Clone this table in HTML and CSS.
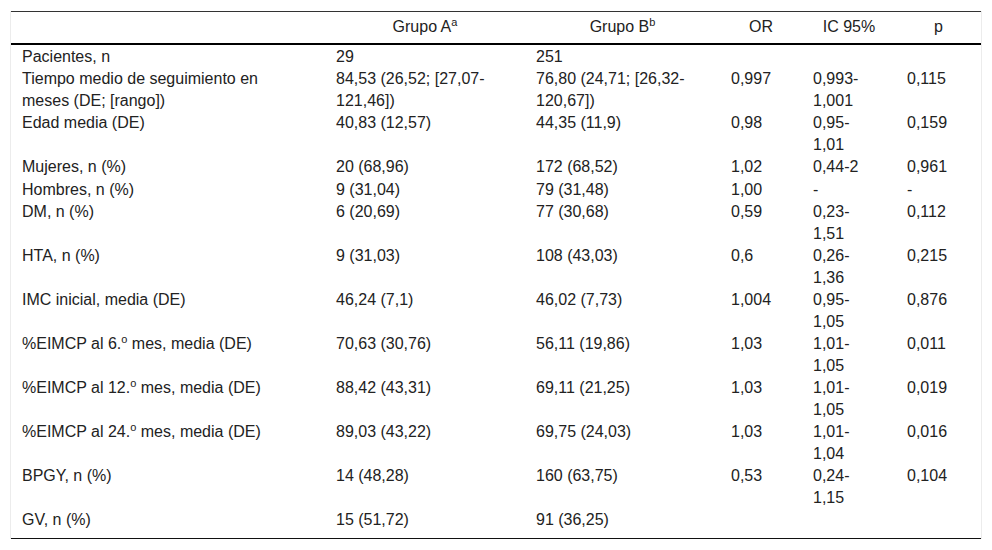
FILE: index.html
```html
<!DOCTYPE html>
<html lang="es">
<head>
<meta charset="utf-8">
<title>Tabla</title>
<link rel="stylesheet" href="styles.css">
</head>
<body>
<div class="wrap">
<table class="data">
<colgroup>
<col class="c1"><col class="c2"><col class="c3"><col class="c4"><col class="c5"><col class="c6">
</colgroup>
<thead>
<tr>
<th></th>
<th>Grupo A<sup>a</sup></th>
<th>Grupo B<sup>b</sup></th>
<th>OR</th>
<th>IC 95%</th>
<th>p</th>
</tr>
</thead>
<tbody>
<tr><td>Pacientes, n</td><td>29</td><td>251</td><td></td><td></td><td></td></tr>
<tr><td>Tiempo medio de seguimiento en meses (DE; [rango])</td><td>84,53 (26,52; [27,07-121,46])</td><td>76,80 (24,71; [26,32-120,67])</td><td>0,997</td><td>0,993-1,001</td><td>0,115</td></tr>
<tr><td>Edad media (DE)</td><td>40,83 (12,57)</td><td>44,35 (11,9)</td><td>0,98</td><td>0,95-1,01</td><td>0,159</td></tr>
<tr><td>Mujeres, n (%)</td><td>20 (68,96)</td><td>172 (68,52)</td><td>1,02</td><td>0,44-2</td><td>0,961</td></tr>
<tr><td>Hombres, n (%)</td><td>9 (31,04)</td><td>79 (31,48)</td><td>1,00</td><td>-</td><td>-</td></tr>
<tr><td>DM, n (%)</td><td>6 (20,69)</td><td>77 (30,68)</td><td>0,59</td><td>0,23-1,51</td><td>0,112</td></tr>
<tr><td>HTA, n (%)</td><td>9 (31,03)</td><td>108 (43,03)</td><td>0,6</td><td>0,26-1,36</td><td>0,215</td></tr>
<tr><td>IMC inicial, media (DE)</td><td>46,24 (7,1)</td><td>46,02 (7,73)</td><td>1,004</td><td>0,95-1,05</td><td>0,876</td></tr>
<tr><td>%EIMCP al 6.<sup>o</sup> mes, media (DE)</td><td>70,63 (30,76)</td><td>56,11 (19,86)</td><td>1,03</td><td>1,01-1,05</td><td>0,011</td></tr>
<tr><td>%EIMCP al 12.<sup>o</sup> mes, media (DE)</td><td>88,42 (43,31)</td><td>69,11 (21,25)</td><td>1,03</td><td>1,01-1,05</td><td>0,019</td></tr>
<tr><td>%EIMCP al 24.<sup>o</sup> mes, media (DE)</td><td>89,03 (43,22)</td><td>69,75 (24,03)</td><td>1,03</td><td>1,01-1,04</td><td>0,016</td></tr>
<tr><td>BPGY, n (%)</td><td>14 (48,28)</td><td>160 (63,75)</td><td>0,53</td><td>0,24-1,15</td><td>0,104</td></tr>
<tr class="last"><td>GV, n (%)</td><td>15 (51,72)</td><td>91 (36,25)</td><td></td><td></td><td></td></tr>
</tbody>
</table>
</div>
</body>
</html>
```

FILE: styles.css
```css
html, body {
  margin: 0;
  padding: 0;
  background: #ffffff;
}

body {
  font-family: "Liberation Sans", Arial, sans-serif;
  font-size: 16px;
  color: #222222;
}

.wrap {
  margin: 11px 0 0 10px;
  width: 970px;
  border-left: 1px solid #ececec;
  border-right: 1px solid #ececec;
}

.data {
  width: 970px;
  table-layout: fixed;
  border-collapse: collapse;
  border-top: 1px solid #333333;
  border-bottom: 1px solid #111111;
}

.c1 { width: 314px; }
.c2 { width: 200px; }
.c3 { width: 195px; }
.c4 { width: 82px; }
.c5 { width: 94px; }
.c6 { width: 85px; }

.data th {
  font-weight: normal;
  text-align: center;
  line-height: 21.5px;
  padding: 4px 11px 5px;
  border-bottom: 2px solid #000000;
}

.data td {
  vertical-align: top;
  text-align: left;
  line-height: 21.5px;
  padding: 1px 20px 0 11px;
}

.data tr.last td {
  padding-bottom: 7px;
}

.data sup {
  font-size: 11px;
  line-height: 0;
  vertical-align: 6px;
}
```
